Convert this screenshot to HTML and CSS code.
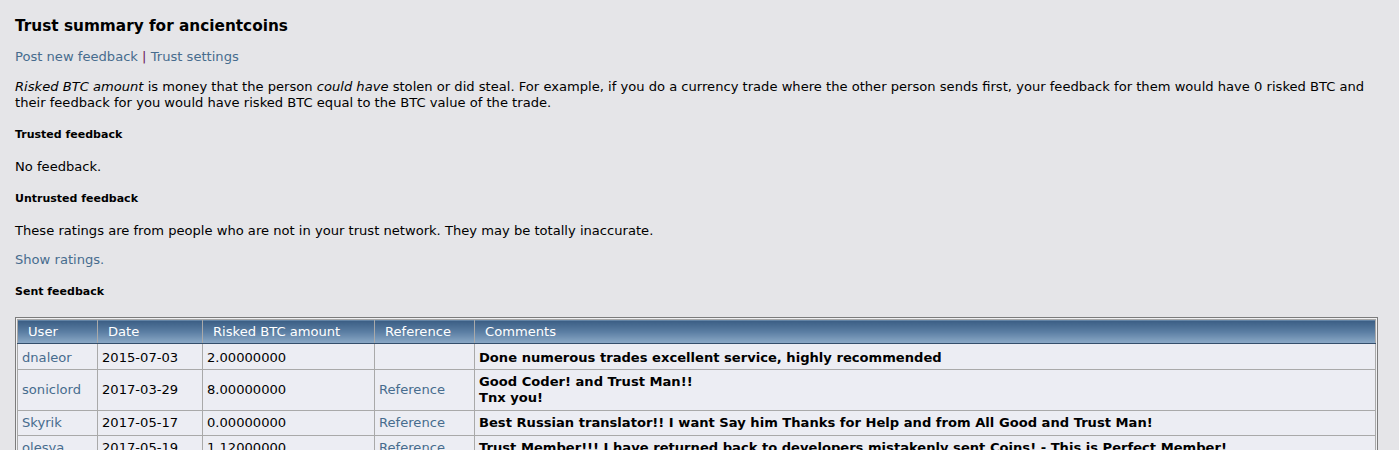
FILE: index.html
```html
<!DOCTYPE html>
<html>
<head>
<meta charset="utf-8">
<link rel="stylesheet" href="styles.css">
</head>
<body>
<div class="page">
  <h2 class="title">Trust summary for ancientcoins</h2>
  <div class="links"><a href="#">Post new feedback</a> <span class="sep">|</span> <a href="#">Trust settings</a></div>
  <p class="intro"><i>Risked BTC amount</i> is money that the person <i>could have</i> stolen or did steal. For example, if you do a currency trade where the other person sends first, your feedback for them would have 0 risked BTC and their feedback for you would have risked BTC equal to the BTC value of the trade.</p>
  <h4 class="sub sub-trusted">Trusted feedback</h4>
  <p class="line line-nofb">No feedback.</p>
  <h4 class="sub sub-untrusted">Untrusted feedback</h4>
  <p class="line line-these">These ratings are from people who are not in your trust network. They may be totally inaccurate.</p>
  <div class="line line-show"><a href="#">Show ratings.</a></div>
  <h4 class="sub sub-sent">Sent feedback</h4>
  <div class="tablewrap">
    <table class="fb">
      <thead>
        <tr>
          <th class="c-user">User</th>
          <th class="c-date">Date</th>
          <th class="c-risk">Risked BTC amount</th>
          <th class="c-ref">Reference</th>
          <th class="c-com">Comments</th>
        </tr>
      </thead>
      <tbody>
        <tr class="first">
          <td><a href="#">dnaleor</a></td>
          <td>2015-07-03</td>
          <td>2.00000000</td>
          <td></td>
          <td class="com">Done numerous trades excellent service, highly recommended</td>
        </tr>
        <tr>
          <td><a href="#">soniclord</a></td>
          <td>2017-03-29</td>
          <td>8.00000000</td>
          <td><a href="#">Reference</a></td>
          <td class="com">Good Coder! and Trust Man!!<br>Tnx you!</td>
        </tr>
        <tr>
          <td><a href="#">Skyrik</a></td>
          <td>2017-05-17</td>
          <td>0.00000000</td>
          <td><a href="#">Reference</a></td>
          <td class="com">Best Russian translator!! I want Say him Thanks for Help and from All Good and Trust Man!</td>
        </tr>
        <tr>
          <td><a href="#">olesya</a></td>
          <td>2017-05-19</td>
          <td>1.12000000</td>
          <td><a href="#">Reference</a></td>
          <td class="com">Trust Member!!! I have returned back to developers mistakenly sent Coins! - This is Perfect Member!</td>
        </tr>
      </tbody>
    </table>
  </div>
</div>
</body>
</html>
```

FILE: styles.css
```css
html, body {
  margin: 0;
  padding: 0;
  background: #E5E5E8;
}
body {
  font-family: "DejaVu Sans", Verdana, sans-serif;
  font-size: 13.1px;
  line-height: 16px;
  color: #000;
}
a {
  color: #476C8E;
  text-decoration: none;
}
.page {
  width: 1363px;
  padding: 16px 0 0 15px;
}
.title {
  margin: 0;
  font-size: 15.3px;
  line-height: 20px;
  font-weight: bold;
}
.links {
  margin-top: 13px;
}
.sep {
  color: #6b1f5a;
}
.intro {
  margin: 14px 0 0;
  width: 1355px;
}
.sub {
  margin: 17px 0 0;
  font-size: 11px;
  line-height: 14px;
  font-weight: bold;
}
.line {
  margin: 17px 0 0;
}
.line-show {
  margin-top: 13px;
}
.tablewrap {
  margin-top: 18px;
  border: 1px solid #7c7c7c;
  padding: 1px;
  background: #F0F0F2;
}
.fb {
  width: 100%;
  border-collapse: collapse;
  border: 1px solid #A9A9A9;
  background: #ECEDF3;
}
.fb th {
  text-align: left;
  font-weight: normal;
  color: #fff;
  padding: 4px 4px 3px 10px;
  height: 16px;
  background: linear-gradient(to bottom, #3a5d83 0%, #5b7ea3 50%, #8caac7 100%);
  border-left: 1px solid #A9A9A9;
  border-bottom: 1px solid #344e6b;
}
.fb th:first-child {
  border-left: 0;
}
.fb td {
  padding: 4px 4px;
  border: 1px solid #A9A9A9;
  vertical-align: middle;
}
.fb tr.first td {
  padding-top: 6px;
  padding-bottom: 3px;
}
.fb .com {
  font-weight: bold;
}
.c-user { width: 65px; }
.c-date { width: 90px; }
.c-risk { width: 157px; }
.c-ref { width: 85px; }
```
